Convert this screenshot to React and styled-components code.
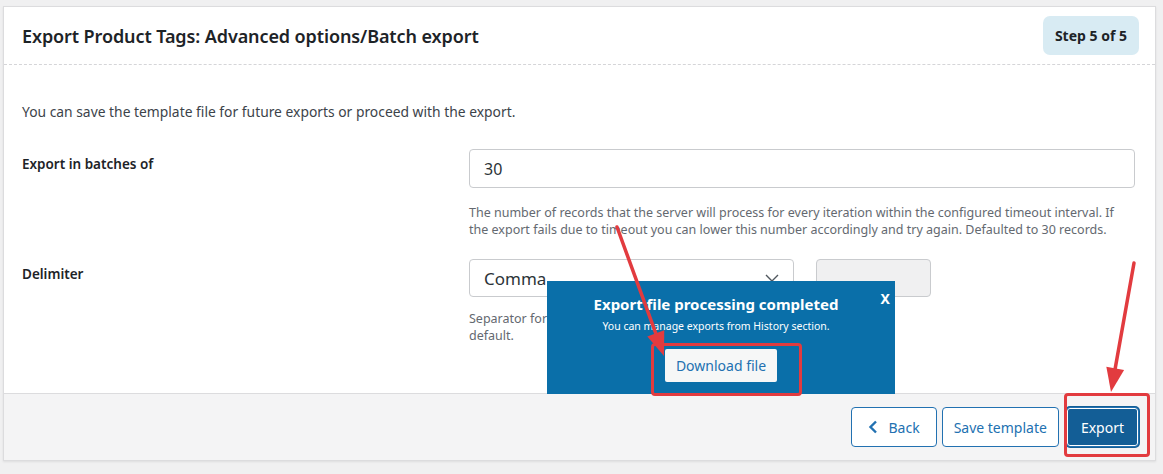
import React from 'react'
import styled, { createGlobalStyle } from 'styled-components'

const GlobalStyle = createGlobalStyle`
  html, body {
    margin: 0;
    padding: 0;
    background: #f0f0f1;
    font-family: 'Noto Sans', 'Open Sans', Arial, sans-serif;
    color: #1d2327;
  }
`

const Page = styled.div`
  position: relative;
  width: 1163px;
  height: 474px;
  padding: 6px 7px 0 3px;
  box-sizing: border-box;
`

const Card = styled.div`
  background: #fff;
  border: 1px solid #dcdcde;
  box-shadow: 0 1px 2px rgba(0, 0, 0, 0.08);
  display: flex;
  flex-direction: column;
  height: 455px;
  box-sizing: border-box;
`

const Header = styled.div`
  display: flex;
  align-items: center;
  justify-content: space-between;
  height: 57px;
  padding: 0 16px 0 18px;
  border-bottom: 1px dashed #d5d5d8;
`

const Title = styled.h2`
  margin: 0;
  font-size: 18px;
  font-weight: 600;
  color: #1d2327;
  letter-spacing: -0.1px;
`

const StepBadge = styled.div`
  background: #d8ebf3;
  border-radius: 7px;
  padding: 0 12px;
  height: 39px;
  display: flex;
  align-items: center;
  font-size: 14px;
  font-weight: 700;
  color: #1d2327;
`

const Body = styled.div`
  flex: 1;
  padding: 37px 20px 0 18px;
`

const Intro = styled.p`
  margin: 0 0 27px;
  font-size: 13.85px;
  line-height: 20px;
  color: #3c434a;
`

const Row = styled.div`
  display: grid;
  grid-template-columns: 447px 1fr;
  margin-bottom: ${p => p.$gap || 0}px;
`

const Label = styled.div`
  font-size: 13.5px;
  font-weight: 600;
  color: #1d2327;
  padding-top: ${p => p.$top || 6}px;
`

const Field = styled.div`
  display: flex;
  flex-direction: column;
`

const Controls = styled.div`
  display: flex;
  gap: 22px;
`

const Input = styled.div`
  height: ${p => p.$h || 39}px;
  box-sizing: border-box;
  border: 1px solid #c9cbce;
  border-radius: 4px;
  display: flex;
  align-items: center;
  padding: 0 14px;
  font-size: 16px;
  color: #2c3338;
  width: ${p => p.$w ? `${p.$w}px` : '100%'};
  background: ${p => p.$muted ? '#f0f0f1' : '#fff'};
  justify-content: space-between;
`

const Help = styled.p`
  margin: ${p => p.$top || 16}px 0 0;
  font-size: 12.5px;
  line-height: 17px;
  color: #646970;
`

const Footer = styled.div`
  height: 66px;
  background: #f4f4f5;
  border-top: 1px solid #dcdcde;
  display: flex;
  align-items: center;
  justify-content: flex-end;
  gap: 5px;
  padding: 0 16px;
`

const Button = styled.button`
  height: 40px;
  box-sizing: border-box;
  padding: 0 ${p => p.$pad || 13}px;
  border-radius: 4px;
  border: 1px solid #2271b1;
  background: ${p => p.$primary ? '#135e96' : '#fff'};
  color: ${p => p.$primary ? '#fff' : '#2271b1'};
  font-family: inherit;
  font-size: 14px;
  display: flex;
  align-items: center;
  gap: 10px;
  margin-left: ${p => p.$primary ? 2 : 0}px;
  ${p => p.$primary && 'box-shadow: inset 0 0 0 1px #fff, 0 0 0 1px #135e96;'}
`

const Popup = styled.div`
  position: absolute;
  left: 547px;
  top: 281px;
  width: 348px;
  height: 113px;
  background: #0a6fa9;
  color: #fff;
  display: flex;
  flex-direction: column;
  align-items: center;
  box-sizing: border-box;
  padding-top: 13px;
`

const PopupTitle = styled.div`
  font-size: 15px;
  font-weight: 700;
  line-height: 20px;
  margin-right: 10px;
`

const PopupText = styled.div`
  font-size: 10.5px;
  line-height: 14px;
  margin: 5px 10px 0 0;
`

const Close = styled.span`
  position: absolute;
  right: 5px;
  top: 8px;
  font-size: 14px;
  font-weight: 700;
`

const DownloadButton = styled.div`
  margin-top: 16px;
  height: 33px;
  padding: 0 11px;
  display: flex;
  align-items: center;
  background: #f6f7f7;
  color: #2271b1;
  font-size: 14px;
  border-radius: 2px;
`

const Highlight = styled.div`
  position: absolute;
  border: 3px solid #e23b3f;
  border-radius: 4px;
  box-sizing: border-box;
  left: ${p => p.$x}px;
  top: ${p => p.$y}px;
  width: ${p => p.$w}px;
  height: ${p => p.$h}px;
`

const Overlay = styled.svg`
  position: absolute;
  left: 0;
  top: 0;
  pointer-events: none;
`

const Arrow = ({ x1, y1, x2, y2 }) => {
  const dx = x2 - x1
  const dy = y2 - y1
  const len = Math.hypot(dx, dy)
  const ux = dx / len
  const uy = dy / len
  const hl = 24
  const hw = 9
  const bx = x2 - ux * hl
  const by = y2 - uy * hl
  const pts = `${x2},${y2} ${bx - uy * hw},${by + ux * hw} ${bx + uy * hw},${by - ux * hw}`
  return (
    <g>
      <line x1={x1} y1={y1} x2={bx} y2={by} stroke='#e23b3f' strokeWidth='3.5' strokeLinecap='round' />
      <polygon points={pts} fill='#e23b3f' />
    </g>
  )
}

export default function App () {
  return (
    <Page>
      <GlobalStyle />
      <Card>
        <Header>
          <Title>Export Product Tags: Advanced options/Batch export</Title>
          <StepBadge>Step 5 of 5</StepBadge>
        </Header>
        <Body>
          <Intro>You can save the template file for future exports or proceed with the export.</Intro>
          <Row $gap={21}>
            <Label $top={6}>Export in batches of</Label>
            <Field>
              <Input>30</Input>
              <Help>
                The number of records that the server will process for every iteration within the configured timeout interval. If
                the export fails due to timeout you can lower this number accordingly and try again. Defaulted to 30 records.
              </Help>
            </Field>
          </Row>
          <Row>
            <Label $top={6}>Delimiter</Label>
            <Field>
              <Controls>
                <Input $w={325} $h={38}>
                  <span style={{ fontSize: 17 }}>Comma</span>
                  <svg width='14' height='9' viewBox='0 0 14 9'>
                    <path d='M1 1l6 6 6-6' fill='none' stroke='#50575e' strokeWidth='1.4' />
                  </svg>
                </Input>
                <Input $w={115} $h={38} $muted />
              </Controls>
              <Help $top={13}>
                Separator for differentiating the columns in the CSV file. Assumes ',' by
                <br />
                default.
              </Help>
            </Field>
          </Row>
        </Body>
        <Footer>
          <Button $pad={16}>
            <svg width='10' height='14' viewBox='0 0 10 14'>
              <path d='M8 1.5L2.5 7 8 12.5' fill='none' stroke='#2271b1' strokeWidth='2.4' />
            </svg>
            Back
          </Button>
          <Button $pad={11}>Save template</Button>
          <Button $primary $pad={14}>Export</Button>
        </Footer>
      </Card>

      <Popup>
        <Close>X</Close>
        <PopupTitle>Export file processing completed</PopupTitle>
        <PopupText>You can manage exports from History section.</PopupText>
        <DownloadButton>Download file</DownloadButton>
      </Popup>

      <Highlight $x={651} $y={343} $w={151} $h={53} />
      <Highlight $x={1064} $y={393} $w={86} $h={64} />

      <Overlay width='1163' height='474' viewBox='0 0 1163 474'>
        <Arrow x1={617} y1={227} x2={664} y2={356} />
        <Arrow x1={1134} y1={263} x2={1111} y2={392} />
      </Overlay>
    </Page>
  )
}
